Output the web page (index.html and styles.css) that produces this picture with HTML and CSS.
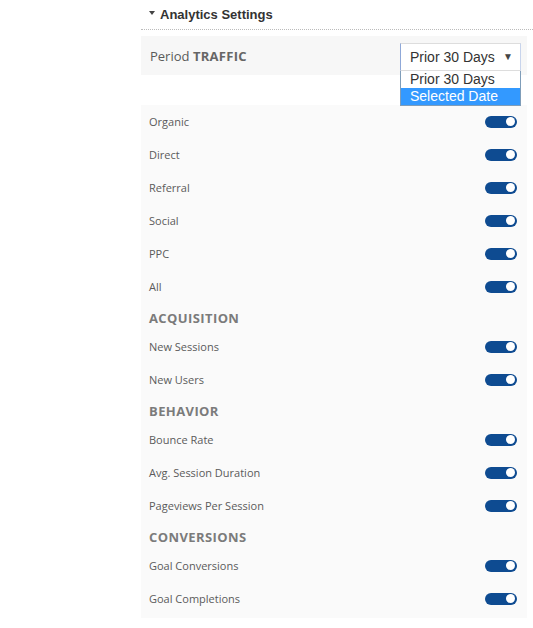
FILE: index.html
```html
<!DOCTYPE html>
<html lang="en">
  <head>
    <meta charset="UTF-8" />
    <title>Analytics Settings</title>
    <link rel="stylesheet" href="styles.css">
  </head>
  <body>
    <div class="settings">
      <div class="settings-title">
        <span class="caret"></span>
        Analytics Settings
      </div>

      <div class="period-row">
        <span class="period-label">Period <b>TRAFFIC</b></span>
        <div class="select-wrap">
          <div class="select-box">
            <span>Prior 30 Days</span>
            <span class="select-arrow">&#9660;</span>
          </div>
          <ul class="select-list">
            <li>Prior 30 Days</li>
            <li class="active">Selected Date</li>
          </ul>
        </div>
      </div>

      <div class="options">
        <div class="option"><span>Organic</span><span class="toggle"></span></div>
        <div class="option"><span>Direct</span><span class="toggle"></span></div>
        <div class="option"><span>Referral</span><span class="toggle"></span></div>
        <div class="option"><span>Social</span><span class="toggle"></span></div>
        <div class="option"><span>PPC</span><span class="toggle"></span></div>
        <div class="option"><span>All</span><span class="toggle"></span></div>

        <div class="group-title">ACQUISITION</div>
        <div class="option"><span>New Sessions</span><span class="toggle"></span></div>
        <div class="option"><span>New Users</span><span class="toggle"></span></div>

        <div class="group-title">BEHAVIOR</div>
        <div class="option"><span>Bounce Rate</span><span class="toggle"></span></div>
        <div class="option"><span>Avg. Session Duration</span><span class="toggle"></span></div>
        <div class="option"><span>Pageviews Per Session</span><span class="toggle"></span></div>

        <div class="group-title">CONVERSIONS</div>
        <div class="option"><span>Goal Conversions</span><span class="toggle"></span></div>
        <div class="option"><span>Goal Completions</span><span class="toggle"></span></div>
      </div>
    </div>
  </body>
</html>
```

FILE: styles.css
```css
/* General styles */
body {
  margin: 0;
  background: #fff;
  font-family: "Open Sans", sans-serif;
  color: #555;
}

.settings {
  margin-left: 141px;
  width: 392px;
}

/* Title */
.settings-title {
  height: 29px;
  padding-left: 8px;
  border-bottom: 1px dotted #bbb;
  font-family: "Liberation Sans", Arial, sans-serif;
  font-size: 13px;
  font-weight: bold;
  color: #333;
  line-height: 29px;
  display: flex;
  align-items: center;
}

.caret {
  width: 0;
  height: 0;
  border-left: 3.5px solid transparent;
  border-right: 3.5px solid transparent;
  border-top: 4px solid #444;
  margin-right: 5px;
  margin-top: -3px;
}

/* Period row */
.period-row {
  margin-top: 6px;
  width: 386px;
  height: 39px;
  background: #f7f7f7;
  box-sizing: border-box;
  padding: 0 6px 0 9px;
  display: flex;
  align-items: center;
  justify-content: space-between;
}

.period-label {
  font-size: 13px;
  color: #5a5a5a;
}

.period-label b {
  color: #666;
  letter-spacing: 0.3px;
}

.select-wrap {
  position: relative;
  margin-top: 2px;
}

.select-box {
  width: 121px;
  height: 28px;
  box-sizing: border-box;
  background: #fff;
  border: 1px solid #ddd;
  border-left-color: #8fa8d8;
  border-right-color: #c8d4ec;
  padding: 0 7px 0 9px;
  font-family: "Liberation Sans", Arial, sans-serif;
  font-size: 14px;
  color: #333;
  display: flex;
  align-items: center;
  justify-content: space-between;
}

.select-arrow {
  font-size: 10px;
  color: #444;
}

.select-list {
  position: absolute;
  left: 0;
  top: 28px;
  width: 121px;
  box-sizing: border-box;
  margin: 0;
  padding: 0;
  list-style: none;
  background: #fff;
  border: 1px solid #7f9db9;
  border-top: none;
  font-family: "Liberation Sans", Arial, sans-serif;
  font-size: 14px;
  color: #333;
  z-index: 2;
}

.select-list li {
  height: 17px;
  line-height: 17px;
  padding-left: 9px;
}

.select-list li.active {
  background: #3399ff;
  color: #fff;
}

/* Options list */
.options {
  margin-top: 30px;
  width: 386px;
  background: #fafafa;
  padding-bottom: 3px;
}

.option {
  height: 33px;
  padding: 0 10px 0 8px;
  display: flex;
  align-items: center;
  justify-content: space-between;
  font-size: 11px;
  color: #5a5a5a;
}

.group-title {
  height: 27px;
  padding: 3px 0 0 8px;
  box-sizing: border-box;
  display: flex;
  align-items: center;
  font-size: 13px;
  font-weight: bold;
  color: #7b7b7b;
  letter-spacing: 0.4px;
}

.toggle {
  position: relative;
  width: 32px;
  height: 12px;
  border-radius: 6px;
  background: #0e4b91;
}

.toggle:after {
  content: "";
  position: absolute;
  right: 2px;
  top: 1.5px;
  width: 9px;
  height: 9px;
  border-radius: 50%;
  background: #fff;
}
```
